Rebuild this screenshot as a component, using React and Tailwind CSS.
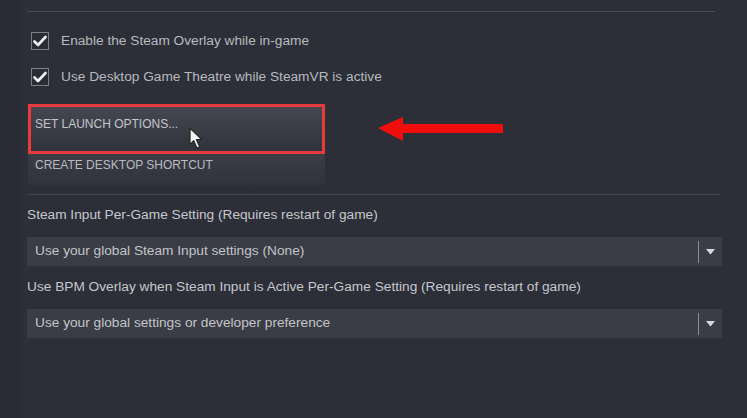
import React from "react";

function Check() {
  return (
    <div className="w-[18px] h-[18px] border border-[#7d8086] bg-[#2a2c33] flex items-center justify-center shrink-0">
      <svg width="14" height="12" viewBox="0 0 14 12">
        <path d="M1.5 6.5 L5 10 L12.5 2" fill="none" stroke="#f2f2f2" strokeWidth="2.6" strokeLinecap="round" strokeLinejoin="round" />
      </svg>
    </div>
  );
}

function Dropdown({ text }) {
  return (
    <div className="w-[695px] h-[29px] bg-[#3a3d46] flex items-center">
      <div className="flex-1 pl-[8px] text-[13.7px] text-[#c2c4c8]">{text}</div>
      <div className="w-px h-[22px] bg-[#8a8d93]" />
      <div className="w-[23px] flex items-center justify-center">
        <svg width="9" height="6" viewBox="0 0 9 6">
          <path d="M0 0 L9 0 L4.5 5.5 Z" fill="#d8d9dc" />
        </svg>
      </div>
    </div>
  );
}

export default function App() {
  return (
    <div className="w-[747px] h-[418px] bg-[#2c2f38] relative overflow-hidden font-['Liberation_Sans',Arial,sans-serif] flex">
      <div className="w-[20px] h-full bg-[#292c34]" />
      <div className="flex-1 flex flex-col pl-[7px]">
        <div className="h-[11px]" />
        <div className="h-px w-[688px] bg-[#494c54]" />
        <div className="mt-[20px] flex items-center h-[18px] pl-[4px] gap-[12px]">
          <Check />
          <span className="text-[13.7px] text-[#b7b9be]">Enable the Steam Overlay while in-game</span>
        </div>
        <div className="mt-[18px] flex items-center h-[18px] pl-[4px] gap-[12px]">
          <Check />
          <span className="text-[13.7px] text-[#b7b9be]">Use Desktop Game Theatre while SteamVR is active</span>
        </div>
        <div className="mt-[18px] ml-px w-[297px] flex flex-col bg-[#363941]">
          <div className="relative h-[50px] bg-gradient-to-b from-[#464952] to-[#2f323a] pl-[7px] pt-[11px] leading-[16px]">
            <span className="text-[12px] text-[#c3c5ca]">SET LAUNCH OPTIONS...</span>
            <div className="absolute inset-0 border-[3px] border-[#e8393c]" />
          </div>
          <div className="h-[31px] bg-gradient-to-b from-[#3a3d45] to-[#30333b] pl-[7px] pt-[2px] leading-[16px]">
            <span className="text-[12px] text-[#b9bbc0]">CREATE DESKTOP SHORTCUT</span>
          </div>
        </div>
        <div className="mt-[9px] h-px w-[693px] bg-[#41444c]" />
        <div className="mt-[12px] text-[13.7px] leading-[16px] text-[#c5c7cc]">Steam Input Per-Game Setting (Requires restart of game)</div>
        <div className="mt-[14px]">
          <Dropdown text="Use your global Steam Input settings (None)" />
        </div>
        <div className="mt-[13px] text-[13.7px] leading-[16px] text-[#c5c7cc]">Use BPM Overlay when Steam Input is Active Per-Game Setting (Requires restart of game)</div>
        <div className="mt-[14px]">
          <Dropdown text="Use your global settings or developer preference" />
        </div>
      </div>

      <svg className="absolute left-[376px] top-[114px]" width="130" height="30" viewBox="0 0 130 30">
        <path d="M2 14 L27 3 L27 10 L127 10 L127 19 L27 19 L27 27 Z" fill="#f20d0d" />
      </svg>

      <svg className="absolute left-[189px] top-[127px]" width="17" height="24" viewBox="0 0 16 22">
        <path d="M1 1 L1 16 L4.5 12.5 L7.5 19.5 L10 18.5 L7 11.5 L12 11.5 Z" fill="#f4f4f4" stroke="#222" strokeWidth="1" strokeLinejoin="round" />
      </svg>
    </div>
  );
}
